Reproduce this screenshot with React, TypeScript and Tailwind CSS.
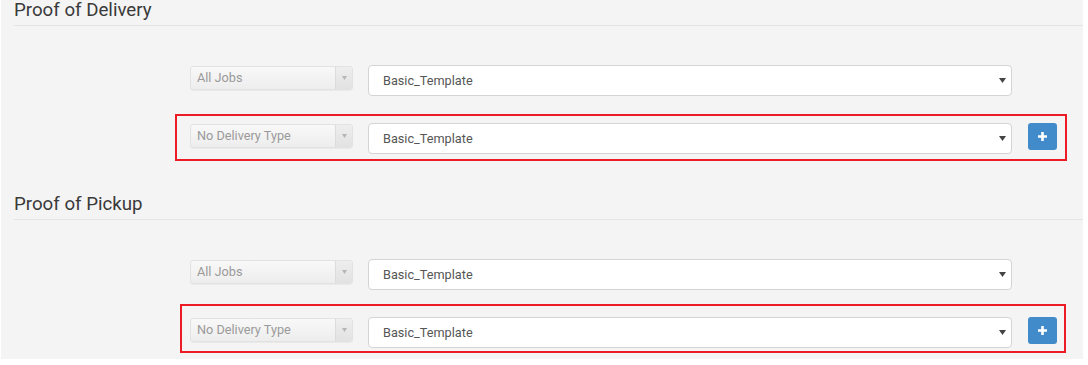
const font = { fontFamily: 'Roboto, "Liberation Sans", sans-serif' };

function JobSelect({ label }: { label: string }) {
  return (
    <div className="mt-px flex h-[24px] w-[163px] shrink-0 overflow-hidden rounded-[3px] border border-[#e2e2e2] bg-gradient-to-b from-[#f8f8f8] to-[#ededed] shadow-[0_1px_0_rgba(0,0,0,0.04)]">
      <div className="flex flex-1 items-center pl-[6px] text-[12.7px] text-[#9a9a9a]">
        {label}
      </div>
      <div className="flex w-[17px] items-center justify-center border-l border-[#dcdcdc] bg-gradient-to-b from-[#eeeeee] to-[#e2e2e2]">
        <svg width="5" height="4" viewBox="0 0 5 4">
          <path d="M0 0h5L2.5 4z" fill="#b5b5b5" />
        </svg>
      </div>
    </div>
  );
}

function TemplateSelect() {
  return (
    <div className="ml-[15px] flex h-[31px] w-[644px] shrink-0 items-center justify-between rounded-[4px] border border-[#d4d4d4] bg-white pl-[14px] pr-[5px] text-[12.7px] text-[#555]">
      <span>Basic_Template</span>
      <svg width="7" height="5" viewBox="0 0 7 5">
        <path d="M0 0h7L3.5 5z" fill="#444" />
      </svg>
    </div>
  );
}

function AddButton() {
  return (
    <button className="ml-[16px] flex h-[27px] w-[29px] shrink-0 items-center justify-center rounded-[3px] bg-[#428bca]">
      <svg width="9" height="9" viewBox="0 0 9 9">
        <path d="M3.2 0h2.6v3.2H9v2.6H5.8V9H3.2V5.8H0V3.2h3.2z" fill="#fff" />
      </svg>
    </button>
  );
}

function Section({
  title,
  headMt,
  first,
  box,
}: {
  title: string;
  headMt: string;
  first: string;
  box: string;
}) {
  return (
    <div className={headMt}>
      <div className="ml-[13px] border-b border-[#e4e4e4] pb-[4px] text-[18.7px] leading-[21px] text-[#3a3a3a]">
        {title}
      </div>
      <div className={`ml-[189px] flex items-start ${first}`}>
        <JobSelect label="All Jobs" />
        <TemplateSelect />
      </div>
      <div className={`flex items-start border-2 border-[#ed1c24] ${box}`}>
        <JobSelect label="No Delivery Type" />
        <TemplateSelect />
        <AddButton />
      </div>
    </div>
  );
}

export default function App() {
  return (
    <div className="h-[365px] w-[1088px] bg-white" style={font}>
      <div className="ml-px h-[359px] w-[1082px] bg-[#f4f4f4]">
        <Section
          title="Proof of Delivery"
          headMt="pt-0"
          first="mt-[39px]"
          box="ml-[174px] mt-[18px] w-[892px] pl-[13px] pt-[7px] pb-[5px]"
        />
        <Section
          title="Proof of Pickup"
          headMt="mt-[33px]"
          first="mt-[39px]"
          box="ml-[179px] mt-[14px] w-[886px] pl-[8px] pt-[11px] pb-[3px]"
        />
      </div>
    </div>
  );
}
